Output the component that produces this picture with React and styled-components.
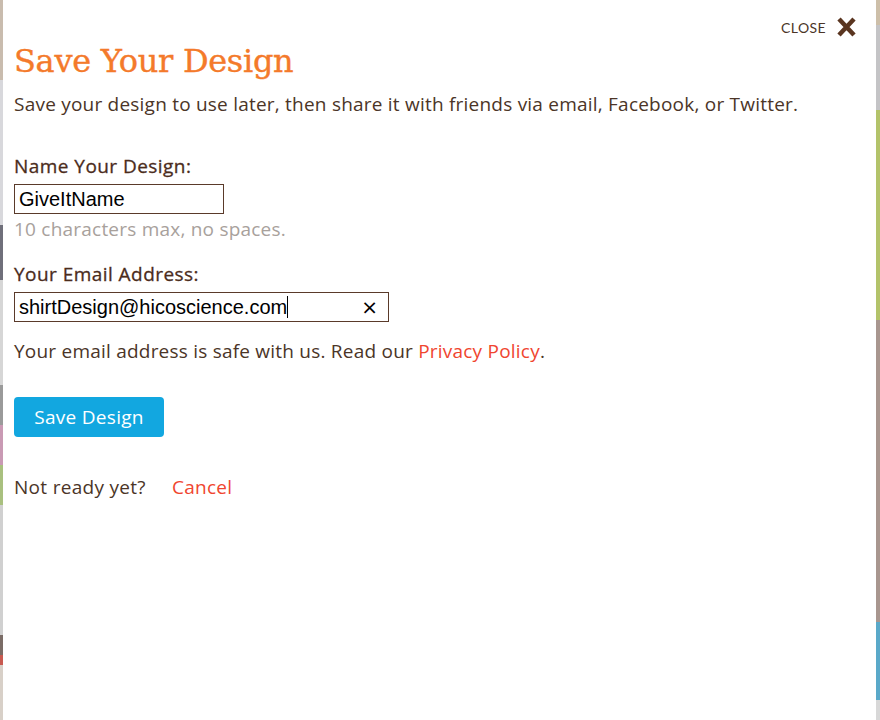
import React from "react";
import styled, { createGlobalStyle } from "styled-components";

const GlobalStyle = createGlobalStyle`
  html, body {
    margin: 0;
    padding: 0;
    background: #ffffff;
  }
  body {
    font-family: "Open Sans", Lato, sans-serif;
  }
`;

const Page = styled.div`
  display: flex;
  width: 880px;
  height: 720px;
  overflow: hidden;
`;

const LeftEdge = styled.div`
  width: 3px;
  flex-shrink: 0;
  background: linear-gradient(
    180deg,
    #c9bcae 0px,
    #c9bcae 80px,
    #d8d8dc 80px,
    #d8d8dc 225px,
    #6f6f7a 225px,
    #6f6f7a 280px,
    #d6d6d6 280px,
    #d6d6d6 385px,
    #9a9a9a 385px,
    #9a9a9a 425px,
    #c99ab4 425px,
    #c99ab4 465px,
    #a9c07f 465px,
    #a9c07f 505px,
    #d0d0d0 505px,
    #d0d0d0 635px,
    #7a6c66 635px,
    #7a6c66 655px,
    #c85a50 655px,
    #c85a50 665px,
    #d8d0c8 665px
  );
`;

const RightEdge = styled.div`
  width: 4px;
  flex-shrink: 0;
  background: linear-gradient(
    180deg,
    #cdbfa9 0px,
    #cdbfa9 25px,
    #c4c4c6 25px,
    #c4c4c6 110px,
    #b3c36a 110px,
    #b3c36a 320px,
    #a8968f 320px,
    #a8968f 622px,
    #5aa9c9 622px,
    #5aa9c9 700px,
    #d8d8d8 700px
  );
`;

const Modal = styled.div`
  flex: 1;
  position: relative;
  background: #ffffff;
  padding: 40px 11px 0;
  color: #4b3527;
`;

const CloseLink = styled.a`
  position: absolute;
  top: 17px;
  right: 19px;
  display: flex;
  align-items: center;
  gap: 10px;
  font-family: Lato, sans-serif;
  font-size: 14px;
  letter-spacing: 0.4px;
  color: #4b3527;
  cursor: pointer;
`;

const Title = styled.h1`
  margin: 0;
  font-family: "DejaVu Serif", serif;
  font-weight: normal;
  font-size: 32px;
  letter-spacing: -0.3px;
  line-height: 42px;
  color: #f47a2b;
  -webkit-text-stroke: 0.4px #f47a2b;
`;

const Text = styled.p`
  margin: ${(p) => p.$top || 0}px 0 0;
  font-size: 19px;
  letter-spacing: 0.22px;
  line-height: 24px;
`;

const Field = styled.div`
  display: flex;
  flex-direction: column;
  margin-top: ${(p) => p.$top}px;
`;

const Label = styled.label`
  font-size: 19px;
  font-weight: 500;
  letter-spacing: 0.45px;
  line-height: 24px;
  color: #4b2c1c;
  -webkit-text-stroke: 0.3px #4b2c1c;
`;

const InputBox = styled.div`
  box-sizing: border-box;
  display: flex;
  align-items: center;
  width: ${(p) => p.$width}px;
  height: 30px;
  margin-top: 6px;
  padding: 0 10px 0 4px;
  border: 1px solid #5a3a2a;
  font-family: "Liberation Sans", Arial, sans-serif;
  font-size: 20px;
  color: #000000;
`;

const Caret = styled.span`
  width: 1px;
  height: 22px;
  background: #000000;
`;

const Clear = styled.span`
  margin-left: auto;
  font-family: "DejaVu Sans", sans-serif;
  font-size: 20px;
  color: #000000;
`;

const Hint = styled(Text)`
  margin-top: 3px;
  color: #a8a19c;
`;

const Link = styled.a`
  color: #f0452f;
  cursor: pointer;
`;

const SaveButton = styled.button`
  margin-top: 34px;
  width: 150px;
  height: 40px;
  border: none;
  border-radius: 4px;
  background: #12a7e0;
  color: #ffffff;
  font-family: "Open Sans", sans-serif;
  font-size: 19px;
  letter-spacing: 0.3px;
  cursor: pointer;
`;

const Footer = styled.div`
  display: flex;
  gap: 26px;
  margin-top: 38px;
  font-size: 19px;
  letter-spacing: 0.3px;
  line-height: 24px;
`;

const CloseIcon = () => (
  <svg width="21" height="20" viewBox="0 0 21 20">
    <path d="M3 2 L18 18 M18 2 L3 18" stroke="#5a3520" strokeWidth="4.5" strokeLinecap="butt" />
  </svg>
);

export default function App() {
  return (
    <>
      <GlobalStyle />
      <Page>
        <LeftEdge />
        <Modal>
          <CloseLink>
            CLOSE <CloseIcon />
          </CloseLink>
          <Title>Save Your Design</Title>
          <Text $top={10}>
            Save your design to use later, then share it with friends via email, Facebook, or Twitter.
          </Text>
          <Field $top={38}>
            <Label>Name Your Design:</Label>
            <InputBox $width={210}>GiveItName</InputBox>
            <Hint>10 characters max, no spaces.</Hint>
          </Field>
          <Field $top={21}>
            <Label>Your Email Address:</Label>
            <InputBox $width={375}>
              shirtDesign@hicoscience.com
              <Caret />
              <Clear>×</Clear>
            </InputBox>
          </Field>
          <Text $top={17}>
            Your email address is safe with us. Read our <Link>Privacy Policy</Link>.
          </Text>
          <SaveButton>Save Design</SaveButton>
          <Footer>
            <span>Not ready yet?</span>
            <Link>Cancel</Link>
          </Footer>
        </Modal>
        <RightEdge />
      </Page>
    </>
  );
}
